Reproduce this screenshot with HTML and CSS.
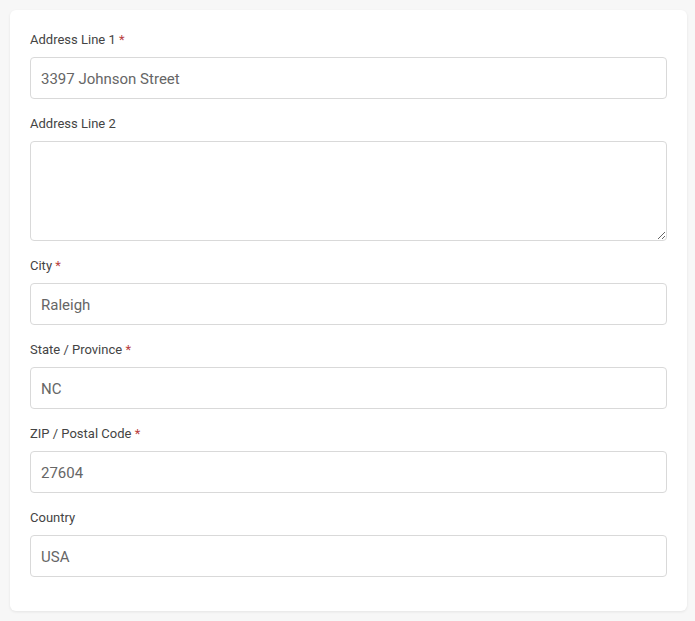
FILE: index.html
```html
<!doctype html>
<html>
<head>
<title>Address</title>
<link rel="stylesheet" href="styles.css">
</head>
<body>
    <form class="card">
        <div class="field">
            <label for="line1">Address Line 1 <span class="req">*</span></label>
            <input type="text" id="line1" value="3397 Johnson Street">
        </div>
        <div class="field">
            <label for="line2">Address Line 2</label>
            <textarea id="line2"></textarea>
        </div>
        <div class="field">
            <label for="city">City <span class="req">*</span></label>
            <input type="text" id="city" value="Raleigh">
        </div>
        <div class="field">
            <label for="state">State / Province <span class="req">*</span></label>
            <input type="text" id="state" value="NC">
        </div>
        <div class="field">
            <label for="zip">ZIP / Postal Code <span class="req">*</span></label>
            <input type="text" id="zip" value="27604">
        </div>
        <div class="field">
            <label for="country">Country</label>
            <input type="text" id="country" value="USA">
        </div>
    </form>
</body>
</html>
```

FILE: styles.css
```css
html
{
    background:#f7f7f7;
}
body
{
    margin:0;
    padding:10px 8px 10px 10px;
    font-family:Roboto, "Liberation Sans", sans-serif;
    color:#333;
}
.card
{
    background:#fff;
    border-radius:6px;
    box-shadow:0 1px 3px rgba(0,0,0,0.08);
    padding:20px 20px 19px;
}
.field
{
    display:flex;
    flex-direction:column;
    margin-bottom:15px;
}
label
{
    font-size:13px;
    line-height:20px;
    margin-bottom:7px;
    color:#444;
}
.req
{
    color:#b94040;
}
input, textarea
{
    box-sizing:border-box;
    width:100%;
    border:1px solid #d9d9d9;
    border-radius:4px;
    padding:1px 10px 0;
    font:15px Roboto, "Liberation Sans", sans-serif;
    color:#666;
    background:#fff;
}
input
{
    height:42px;
}
textarea
{
    height:100px;
    padding:10px;
    resize:vertical;
    display:block;
}
```
